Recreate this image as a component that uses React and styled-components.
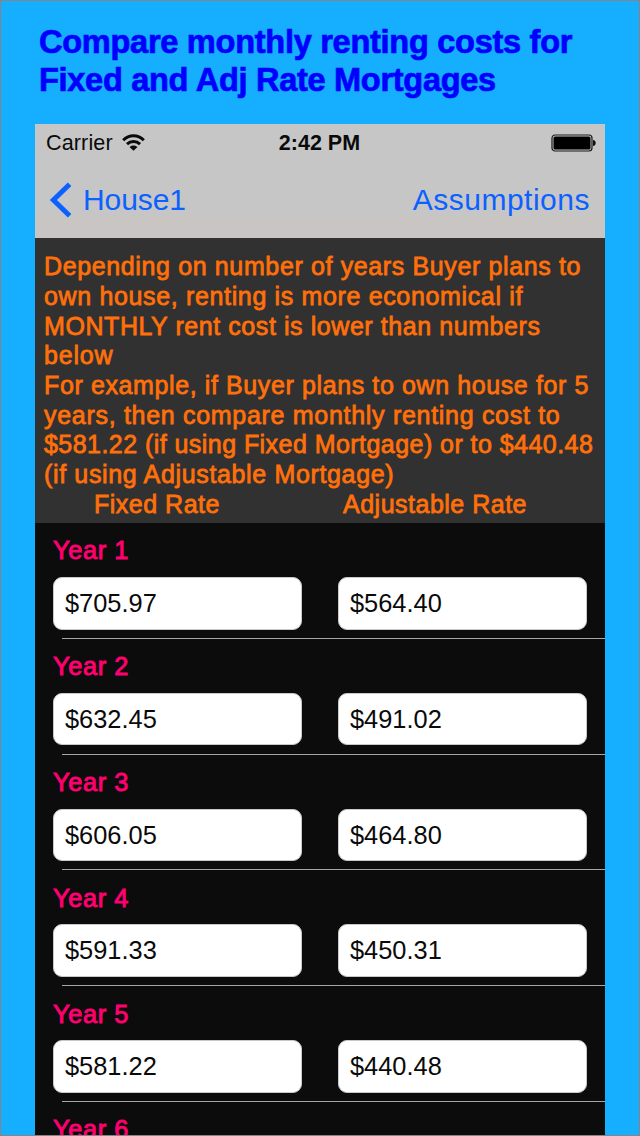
import React from "react";
import styled, { createGlobalStyle } from "styled-components";

const GlobalStyle = createGlobalStyle`
  * { box-sizing: border-box; }
  html, body { margin: 0; padding: 0; overflow: hidden; }
  body { font-family: "Liberation Sans", Arial, Helvetica, sans-serif; }
`;

const Poster = styled.main`
  width: 640px;
  height: 1136px;
  overflow: hidden;
  display: flex;
  flex-direction: column;
  background: #16aeff;
  border: 1px solid #858585;
`;

const Title = styled.h1`
  margin: 0;
  height: 123px;
  padding: 22px 0 0 38px;
  font-size: 32.6px;
  line-height: 38px;
  font-weight: 700;
  color: #0000ff;
  white-space: nowrap;
  -webkit-text-stroke: 0.7px #0000ff;
`;

const TitleLine = styled.span`
  display: block;
  letter-spacing: ${(p) => p.$spacing}px;
`;

const Phone = styled.section`
  width: 570px;
  margin-left: 34px;
  flex: 1;
  min-height: 0;
  overflow: hidden;
  background: #0c0c0c;
`;

const Header = styled.header`
  height: 114px;
  background: linear-gradient(#c6c6c6 0 80%, #c8c5c3 82%);
`;

const StatusBar = styled.div`
  height: 38px;
  padding: 0 9px 0 11px;
  display: grid;
  grid-template-columns: 1fr auto 1fr;
  align-items: center;
  font-size: 21.6px;
  line-height: 38px;
  color: #0a0a0a;
`;

const Carrier = styled.div`
  display: flex;
  align-items: center;
  gap: 9px;
  letter-spacing: 0.1px;

  svg {
    margin-top: -2px;
  }
`;

const Clock = styled.div`
  margin-left: -3px;
  font-weight: 700;
  font-size: 21.5px;
`;

const BatteryIcon = styled.svg`
  justify-self: end;
  margin-top: -1px;
`;

const NavBar = styled.nav`
  height: 75px;
  padding: 0 15px 0 14px;
  display: flex;
  align-items: center;
  justify-content: space-between;
  color: #0b61ff;
  font-size: 30px;
  line-height: 76px;
`;

const Back = styled.div`
  display: flex;
  align-items: center;
  gap: 10px;
  letter-spacing: -0.1px;
`;

const Action = styled.div`
  letter-spacing: 0.5px;
`;

const Note = styled.div`
  height: 285px;
  padding: 14.4px 0 0 9px;
  background: #313131;
  color: #ff700a;
  font-size: 25px;
  line-height: 29.67px;
  white-space: nowrap;
  -webkit-text-stroke: 0.8px #ff700a;
`;

const NoteLine = styled.div`
  letter-spacing: ${(p) => p.$spacing}px;
`;

const Columns = styled.div`
  display: grid;
  grid-template-columns: 249px 1fr;
  padding-left: 50px;
  letter-spacing: 0.5px;
`;

const Row = styled.div`
  height: 115.8px;
  padding: 13.4px 18px 0;
  background: linear-gradient(#a5a5a5, #a5a5a5) 27px 100% / 543px 1px no-repeat;
`;

const Label = styled.div`
  height: 40.6px;
  color: #ff0071;
  font-size: 25.4px;
  line-height: 29px;
  letter-spacing: 0.6px;
  -webkit-text-stroke: 0.9px #ff0071;
`;

const Fields = styled.div`
  display: grid;
  grid-template-columns: 249px 249px;
  column-gap: 36px;
`;

const Field = styled.div`
  height: 52.6px;
  padding-left: 11px;
  border: 1px solid #c9c9c9;
  border-radius: 9px;
  background: #ffffff;
  color: #0a0a0a;
  font-size: 25.4px;
  line-height: 50px;
`;

const titleLines = [
  ["Compare monthly renting costs for", -0.3],
  ["Fixed and Adj Rate Mortgages", -0.32],
];

const noteLines = [
  ["Depending on number of years Buyer plans to", 0.63],
  ["own house, renting is more economical if", 0.65],
  ["MONTHLY rent cost is lower than numbers", 0.57],
  ["below", 0.8],
  ["For example, if Buyer plans to own house for 5", 0.61],
  ["years, then compare monthly renting cost to", 0.7],
  ["$581.22 (if using Fixed Mortgage) or to $440.48", 0.45],
  ["(if using Adjustable Mortgage)", 0.65],
];

const rents = [
  ["Year 1", "$705.97", "$564.40"],
  ["Year 2", "$632.45", "$491.02"],
  ["Year 3", "$606.05", "$464.80"],
  ["Year 4", "$591.33", "$450.31"],
  ["Year 5", "$581.22", "$440.48"],
  ["Year 6", "", ""],
];

function Wifi() {
  return (
    <svg width="23" height="17" viewBox="0 0 23 17" fill="none" stroke="#0a0a0a" strokeWidth="3">
      <path d="M1.2 6.2C7 .4 16 .4 21.8 6.2" />
      <path d="M5 10.2C8.7 6.6 14.3 6.6 18 10.2" />
      <path d="M11.5 16.8 7.5 12.9Q11.5 10 15.5 12.9Z" fill="#0a0a0a" stroke="none" />
    </svg>
  );
}

function Battery() {
  return (
    <BatteryIcon width="45" height="18" viewBox="0 0 45 18">
      <rect x="1" y="1" width="40" height="16" rx="3" fill="none" stroke="#1a1a1a" strokeWidth="1.2" />
      <rect x="2.5" y="2.5" width="37" height="13" rx="1.6" fill="#000" />
      <path d="M42 6Q44.7 6.4 44.7 9T42 12Z" fill="#111" />
    </BatteryIcon>
  );
}

function Chevron() {
  return (
    <svg width="24" height="36" viewBox="0 0 24 36" fill="none" stroke="#0b61ff" strokeWidth="5">
      <path d="M20.6 2.2 4.4 18 20.6 33.8" />
    </svg>
  );
}

export default function App() {
  return (
    <>
      <GlobalStyle />
      <Poster>
        <Title>
          {titleLines.map(([text, spacing]) => (
            <TitleLine key={text} $spacing={spacing}>{text}</TitleLine>
          ))}
        </Title>
        <Phone>
          <Header>
            <StatusBar>
              <Carrier>Carrier<Wifi /></Carrier>
              <Clock>2:42 PM</Clock>
              <Battery />
            </StatusBar>
            <NavBar>
              <Back><Chevron />House1</Back>
              <Action>Assumptions</Action>
            </NavBar>
          </Header>
          <Note>
            {noteLines.map(([text, spacing]) => (
              <NoteLine key={text} $spacing={spacing}>{text}</NoteLine>
            ))}
            <Columns>
              <span>Fixed Rate</span>
              <span>Adjustable Rate</span>
            </Columns>
          </Note>
          {rents.map(([year, fixed, adjustable]) => (
            <Row key={year}>
              <Label>{year}</Label>
              <Fields>
                <Field>{fixed}</Field>
                <Field>{adjustable}</Field>
              </Fields>
            </Row>
          ))}
        </Phone>
      </Poster>
    </>
  );
}
